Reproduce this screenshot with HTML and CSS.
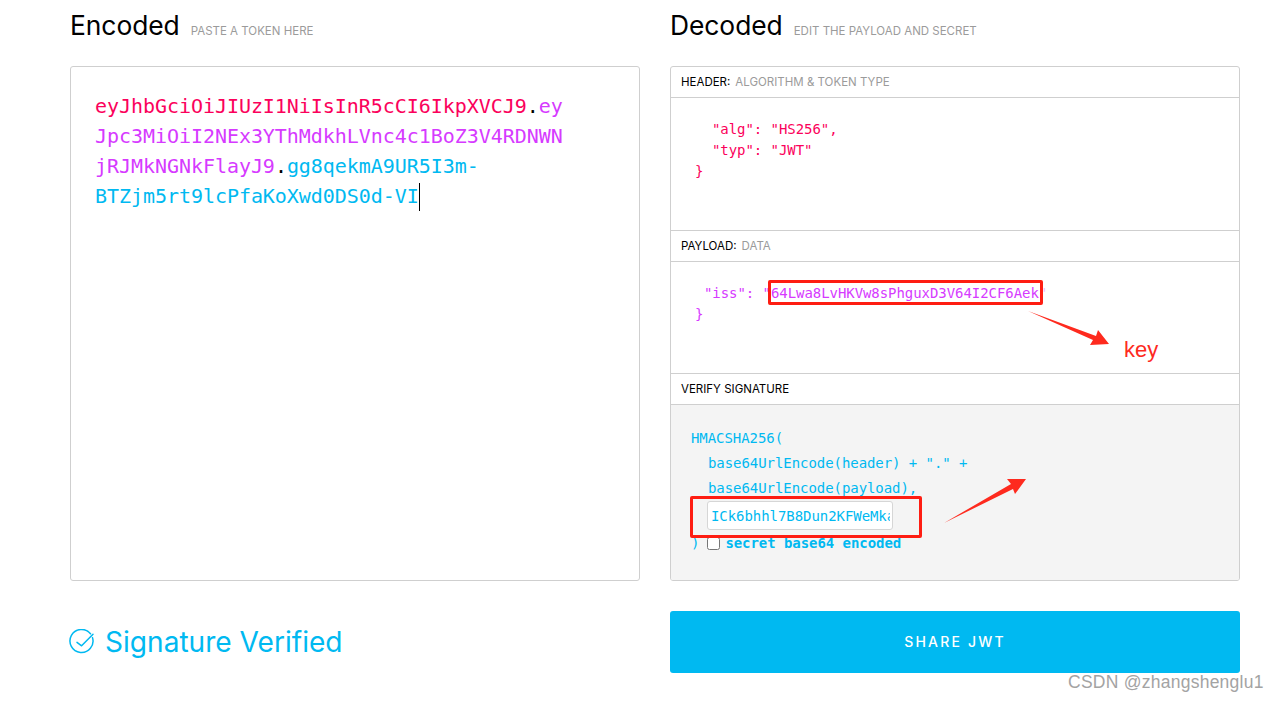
FILE: index.html
```html
<!DOCTYPE html>
<html lang="en">
<head>
<meta charset="utf-8">
<title>JWT Debugger</title>
<link rel="stylesheet" href="styles.css">
</head>
<body>
<main class="debugger">
  <div class="head"><h2>Encoded</h2><small>PASTE A TOKEN HERE</small></div>
  <div class="head"><h2>Decoded</h2><small>EDIT THE PAYLOAD AND SECRET</small></div>

  <div class="box token"><span class="red">eyJhbGciOiJIUzI1NiIsInR5cCI6IkpXVCJ9</span><span class="dot">.</span><span class="purple">ey<br>Jpc3MiOiI2NEx3YThMdkhLVnc4c1BoZ3V4RDNWN<br>jRJMkNGNkFlayJ9</span><span class="dot">.</span><span class="cyan">gg8qekmA9UR5I3m-<br>BTZjm5rt9lcPfaKoXwd0DS0d-VI</span><span class="caret"></span></div>

  <div class="box panels">
    <div class="ptitle">HEADER:<span>ALGORITHM &amp; TOKEN TYPE</span></div>
    <div class="code code-header red">
      <div class="in2">"alg": "HS256",</div>
      <div class="in2">"typ": "JWT"</div>
      <div class="in1">}</div>
    </div>
    <div class="ptitle">PAYLOAD:<span>DATA</span></div>
    <div class="code code-payload purple">
      <div class="in2b">"iss": "64Lwa8LvHKVw8sPhguxD3V64I2CF6Aek<span class="faint">"</span></div>
      <div class="in1">}</div>
    </div>
    <div class="ptitle">VERIFY SIGNATURE</div>
    <div class="verify cyan">
      <div>HMACSHA256(</div>
      <div class="ind">base64UrlEncode(header) + "." +</div>
      <div class="ind">base64UrlEncode(payload),</div>
      <div class="ind"><input class="secret" type="text" value="ICk6bhhl7B8Dun2KFWeMkaRS" aria-label="secret"></div>
      <div class="last">)<input class="check" type="checkbox" aria-label="secret base64 encoded"><b>secret base64 encoded</b></div>
    </div>
  </div>

  <div class="verified">
    <svg class="tick" width="26" height="26" viewBox="0 0 26 26" fill="none" stroke="#00b9f1" stroke-width="1.5" stroke-linecap="round" stroke-linejoin="round" aria-hidden="true">
      <path d="M21.5 4.8A11.5 11.5 0 1 0 23.5 8.6"/>
      <path d="M8 13.4l4.6 3.4L24 5.2"/>
    </svg>
    <span>Signature Verified</span>
  </div>
  <button class="share" type="button">SHARE JWT</button>
</main>

<div class="mark mark-payload"></div>
<div class="mark mark-secret"></div>
<svg class="arrows" width="1278" height="701" viewBox="0 0 1278 701" aria-hidden="true">
  <path d="M1028 311L1096 336 1098 330 1109 344 1090 345 1093 340Z" fill="#fe2a1e"/>
  <path d="M944 523L1011 484 1007 479 1026 479 1015 494 1013 489Z" fill="#fe2a1e"/>
</svg>
<div class="key">key</div>
<div class="watermark">CSDN @zhangshenglu1</div>
</body>
</html>
```
FILE: styles.css
```css
html, body { margin: 0; padding: 0; background: #fff; }
body { width: 1278px; height: 701px; overflow: hidden; position: relative; font-family: Inter, "Liberation Sans", sans-serif; color: #000; }

.debugger { display: grid; grid-template-columns: 570px 570px; grid-template-rows: 66px 515px 92px; column-gap: 30px; padding-left: 70px; }

.head { display: flex; align-items: baseline; gap: 11px; padding-top: 9px; box-sizing: border-box; }
.head h2 { margin: 0; font-size: 26.4px; line-height: 32px; font-weight: 400; letter-spacing: -0.05px; }
.head small { font-size: 11.5px; color: #9b9b9b; }

.box { border: 1px solid #cfcfcf; border-radius: 3px; box-sizing: border-box; }

.token { padding: 24px; font: 20px/30px "DejaVu Sans Mono", "Liberation Mono", monospace; letter-spacing: -0.05px; }
.red { color: #fb015b; }
.purple { color: #d63aff; }
.cyan { color: #00b9f1; }
.dot { color: #000; }
.faint { opacity: 0.35; }
.caret { display: inline-block; width: 1px; height: 28px; background: #000; vertical-align: -8px; }

.panels { display: flex; flex-direction: column; overflow: hidden; }
.ptitle { height: 30px; line-height: 30px; padding-left: 10px; font-size: 11.5px; color: #000; border-bottom: 1px solid #cfcfcf; flex: none; }
.ptitle span { color: #9b9b9b; margin-left: 5px; }

.code { font: 14px/21px "DejaVu Sans Mono", "Liberation Mono", monospace; letter-spacing: -0.06px; box-sizing: border-box; flex: none; border-bottom: 1px solid #cfcfcf; }
.code-header { height: 133px; padding-top: 21px; }
.code-payload { height: 112px; padding-top: 21px; }
.in2 { padding-left: 41px; white-space: pre; }
.in2b { padding-left: 33px; white-space: pre; }
.in1 { padding-left: 24px; }

.verify { flex: 1; background: #f4f4f4; padding: 21px 20px 0; font: 14px/25px "DejaVu Sans Mono", "Liberation Mono", monospace; letter-spacing: -0.06px; }
.ind { padding-left: 17px; }
.secret { display: block; width: 186px; height: 29px; margin-left: -1px; box-sizing: border-box; padding: 0 2px 0 3px; border: 1px solid #d6d6d6; border-radius: 3px; background: #fff; color: #00b9f1; font: 14px "DejaVu Sans Mono", "Liberation Mono", monospace; letter-spacing: -0.06px; outline: none; }
.last { display: flex; align-items: center; height: 27px; }
.last b { font-weight: 700; margin-left: 5px; }
.check { width: 13px; height: 13px; margin: 0 0 0 8px; }

.verified { display: flex; align-items: center; gap: 10px; font-size: 28.1px; color: #00b9f1; height: 62px; margin-top: 30px; margin-left: -1px; }
.tick { flex: none; }

.share { margin: 30px 0 0; height: 62px; width: 570px; border: 0; border-radius: 3px; background: #00b9f1; color: #fff; font: 500 14px Inter, "Liberation Sans", sans-serif; letter-spacing: 2.2px; padding: 0 0 2px; }

.mark { position: absolute; border: 3px solid #fe1d12; border-radius: 2px; box-sizing: border-box; }
.mark-payload { left: 768px; top: 280px; width: 275px; height: 25px; }
.mark-secret { left: 690px; top: 496px; width: 232px; height: 42px; }
.arrows { position: absolute; left: 0; top: 0; pointer-events: none; }
.key { position: absolute; left: 1124px; top: 336px; font: 22px/28px "Liberation Sans", sans-serif; color: #fe2a1e; }
.watermark { position: absolute; left: 1068px; top: 671px; font: 17.5px/22px "Liberation Sans", sans-serif; color: #a3a3a3; letter-spacing: 0.25px; white-space: nowrap; }
```
